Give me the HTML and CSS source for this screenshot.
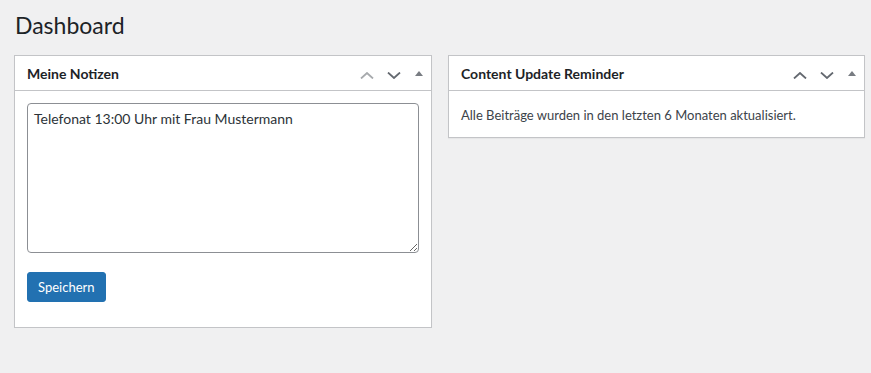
FILE: index.html
```html
<!DOCTYPE html>
<html lang="de">
<head>
    <meta charset="UTF-8">
    <title>Dashboard</title>
    <link rel="stylesheet" href="styles.css">
</head>
<body>
    <div class="wrap">
        <h1>Dashboard</h1>
        <div class="columns">
            <div class="postbox notes">
                <div class="postbox-header">
                    <h2>Meine Notizen</h2>
                    <div class="handle-actions">
                        <button class="handle up disabled" aria-label="Nach oben">
                            <svg width="14" height="7" viewBox="0 0 14 7"><polyline points="1,6.5 7,1 13,6.5"/></svg>
                        </button>
                        <button class="handle down" aria-label="Nach unten">
                            <svg width="14" height="7" viewBox="0 0 14 7"><polyline points="1,0.5 7,6 13,0.5"/></svg>
                        </button>
                        <button class="handle toggle" aria-label="Umschalten">
                            <svg width="8" height="5" viewBox="0 0 8 5"><polygon points="0,5 4,0 8,5"/></svg>
                        </button>
                    </div>
                </div>
                <div class="inside">
                    <textarea class="note-text">Telefonat 13:00 Uhr mit Frau Mustermann</textarea>
                    <button class="button-primary">Speichern</button>
                </div>
            </div>
            <div class="postbox reminder">
                <div class="postbox-header">
                    <h2>Content Update Reminder</h2>
                    <div class="handle-actions">
                        <button class="handle up" aria-label="Nach oben">
                            <svg width="14" height="7" viewBox="0 0 14 7"><polyline points="1,6.5 7,1 13,6.5"/></svg>
                        </button>
                        <button class="handle down" aria-label="Nach unten">
                            <svg width="14" height="7" viewBox="0 0 14 7"><polyline points="1,0.5 7,6 13,0.5"/></svg>
                        </button>
                        <button class="handle toggle" aria-label="Umschalten">
                            <svg width="8" height="5" viewBox="0 0 8 5"><polygon points="0,5 4,0 8,5"/></svg>
                        </button>
                    </div>
                </div>
                <div class="inside">
                    <p>Alle Beiträge wurden in den letzten 6 Monaten aktualisiert.</p>
                </div>
            </div>
        </div>
    </div>
</body>
</html>
```

FILE: styles.css
```css
body {
    margin: 0;
    background: #f0f0f1;
    font-family: Lato, 'Noto Sans', Arial, sans-serif;
    color: #3c434a;
    font-size: 13px;
}
.wrap {
    padding: 0 6px 0 14px;
}
h1 {
    margin: 0;
    padding: 10px 0 0 1px;
    height: 55px;
    box-sizing: border-box;
    font-size: 23px;
    font-weight: 400;
    line-height: 31px;
    color: #1d2327;
}
.columns {
    display: grid;
    grid-template-columns: 418px 417px;
    gap: 16px;
    align-items: start;
}
.postbox {
    background: #fff;
    border: 1px solid #c3c4c7;
    box-shadow: 0 1px 1px rgba(0,0,0,0.04);
}
.postbox-header {
    display: flex;
    align-items: center;
    justify-content: space-between;
    height: 34px;
    border-bottom: 1px solid #c3c4c7;
}
.postbox-header h2 {
    margin: 0;
    padding-left: 12px;
    font-size: 14px;
    font-weight: 700;
    color: #1d2327;
}
.handle-actions {
    display: flex;
    height: 100%;
}
.handle {
    display: flex;
    align-items: center;
    justify-content: center;
    border: none;
    background: none;
    padding: 0;
    width: 27px;
    height: 100%;
    cursor: pointer;
}
.handle svg polyline {
    fill: none;
    stroke: #646970;
    stroke-width: 1.8;
}
.handle.disabled svg polyline {
    stroke: #a7aaad;
}
.handle.up svg,
.handle.down svg {
    margin-top: 4px;
}
.handle.toggle {
    width: 24px;
}
.handle.toggle svg polygon {
    fill: #787c82;
}
.notes .inside {
    padding: 12px 12px 25px 12px;
}
.note-text {
    display: block;
    box-sizing: border-box;
    width: 392px;
    height: 150px;
    padding: 5px 6px;
    border: 1px solid #8c8f94;
    border-radius: 4px;
    font-family: Lato, 'Noto Sans', Arial, sans-serif;
    font-size: 14px;
    line-height: 20px;
    color: #2c3338;
    resize: vertical;
}
.button-primary {
    display: block;
    margin-top: 19px;
    height: 30px;
    padding: 0 10px;
    background: #2271b1;
    border: 1px solid #2271b1;
    border-radius: 3px;
    color: #fff;
    font-family: Lato, 'Noto Sans', Arial, sans-serif;
    font-size: 13px;
    cursor: pointer;
}
.reminder .inside {
    padding: 15px 12px 12px 12px;
}
.reminder p {
    margin: 0;
    line-height: 19px;
}
```
